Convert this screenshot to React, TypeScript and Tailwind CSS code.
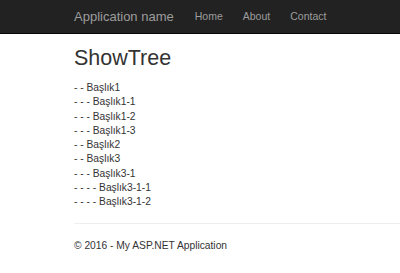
export default function App() {
  const items = [
    "- - Başlık1",
    "- - - Başlık1-1",
    "- - - Başlık1-2",
    "- - - Başlık1-3",
    "- - Başlık2",
    "- - Başlık3",
    "- - - Başlık3-1",
    "- - - - Başlık3-1-1",
    "- - - - Başlık3-1-2",
  ];

  return (
    <div className="w-[400px] h-[273px] overflow-hidden bg-white text-[#333] font-['Liberation_Sans',Arial,sans-serif]">
      {/* Navbar */}
      <nav className="h-[34px] bg-[#222] border-b border-[#080808]">
        <div className="flex items-center h-full pl-[74px]">
          <span className="text-[13px] text-[#9d9d9d] mr-[21px]">Application name</span>
          <ul className="flex gap-[20px] text-[10.5px] text-[#9d9d9d]">
            <li>Home</li>
            <li>About</li>
            <li>Contact</li>
          </ul>
        </div>
      </nav>

      {/* Body */}
      <div className="pl-[74px]">
        <h2 className="text-[21.5px] leading-none mt-[14px] mb-[11.5px] text-[#333]">ShowTree</h2>
        <div className="text-[10.25px] leading-[14.25px]">
          {items.map((t) => (
            <div key={t}>{t}</div>
          ))}
        </div>
        <hr className="mt-[14px] border-t border-[#eee]" />
        <footer className="text-[10.25px] leading-[15px] mt-[13.5px]">© 2016 - My ASP.NET Application</footer>
      </div>
    </div>
  );
}
